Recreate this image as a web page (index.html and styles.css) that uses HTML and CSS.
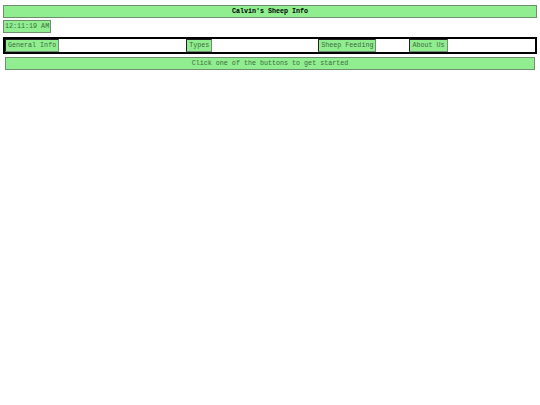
FILE: index.html
```html
<!DOCTYPE html>
<html>
<head>
<meta charset="utf-8">
<link rel="stylesheet" href="styles.css">
</head>
<body>
<div class="header">Calvin's Sheep Info</div>
<div class="clock">12:11:19 AM</div>
<div class="nav">
  <button class="btn">General Info</button>
  <button class="btn btn-types">Types</button>
  <button class="btn btn-feed">Sheep Feeding</button>
  <button class="btn btn-about">About Us</button>
</div>
<div class="message">Click one of the buttons to get started</div>
</body>
</html>
```
FILE: styles.css
```css
html, body {
  background: #ffffff;
}
body {
  margin: 5px 3px;
  font-family: "Liberation Mono", "Courier New", monospace;
  font-size: 6.7px;
  line-height: 9px;
  color: #3d6b3d;
}
.header {
  background: #90ee90;
  border: 1px solid #6f8f6f;
  padding: 1px 0;
  text-align: center;
  font-weight: bold;
  color: #000000;
}
.clock {
  display: inline-block;
  margin-top: 2px;
  background: #90ee90;
  border: 1px solid #6f8f6f;
  padding: 1px 1px;
}
.nav {
  display: flex;
  align-items: center;
  margin-top: 4px;
  border: 2px solid #000000;
  padding: 0;
  background: #ffffff;
}
.btn {
  font-family: inherit;
  font-size: inherit;
  line-height: 9px;
  color: #3d6b3d;
  background: #90ee90;
  border: 1px solid #6f8f6f;
  border-top-color: #222222;
  border-left-color: #222222;
  padding: 1px 2px;
  margin: 0;
}
.btn-types { margin-left: 127px; }
.btn-feed { margin-left: 106px; }
.btn-about { margin-left: 33px; }
.message {
  margin: 3px 2px 0;
  background: #90ee90;
  border: 1px solid #6f8f6f;
  padding: 1px 0;
  text-align: center;
}
```
